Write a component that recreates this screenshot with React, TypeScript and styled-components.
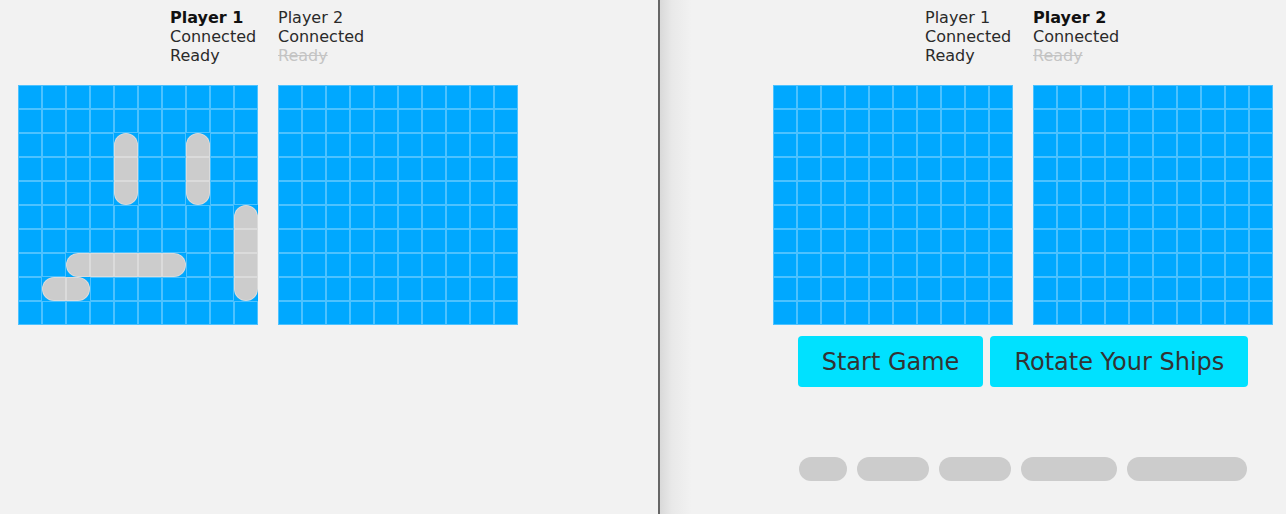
import React from "react";
import styled, { createGlobalStyle, css } from "styled-components";

const GlobalStyle = createGlobalStyle`
  html, body { margin: 0; padding: 0; }
  body {
    font-family: "DejaVu Sans", "Liberation Sans", sans-serif;
    background: #f2f2f2;
    color: #222;
  }
`;

const Page = styled.div`
  display: flex;
  height: 100vh;
  background: #f2f2f2;
  overflow: hidden;
`;

const Pane = styled.div<{ $inset: number; $shaded?: boolean }>`
  box-sizing: border-box;
  padding: 8px 0 0 ${(p) => p.$inset}px;
  ${(p) =>
    p.$shaded
      ? css`
          flex: 1;
          background: linear-gradient(to right, #d9d9d9 0px, #e9e9e9 12px, #f2f2f2 32px);
        `
      : css`
          width: 660px;
          flex: none;
          border-right: 2px solid #666;
        `}
`;

const Column = styled.div`
  width: 500px;
  display: flex;
  flex-direction: column;
  align-items: center;
`;

const PlayersRow = styled.div`
  display: flex;
  gap: 20px;
  font-size: 16px;
  line-height: 19px;
`;

const PlayerInfo = styled.div`
  display: flex;
  flex-direction: column;
  width: 88px;
`;

const Name = styled.span<{ $bold?: boolean }>`
  font-weight: ${(p) => (p.$bold ? 700 : 400)};
  color: ${(p) => (p.$bold ? "#111" : "#2a2a2a")};
`;

const Status = styled.span<{ $off?: boolean }>`
  color: ${(p) => (p.$off ? "#c4c4c4" : "#2a2a2a")};
  text-decoration: ${(p) => (p.$off ? "line-through" : "none")};
`;

const Boards = styled.div`
  display: flex;
  gap: 20px;
  margin-top: 20px;
`;

const Board = styled.div`
  display: grid;
  grid-template-columns: repeat(10, 24px);
  grid-auto-rows: 24px;
  background: #00a8ff;
`;

type End = "top" | "bottom" | "left" | "right" | "mid" | undefined;

const radiusFor = (end: End) => {
  switch (end) {
    case "top":
      return "12px 12px 0 0";
    case "bottom":
      return "0 0 12px 12px";
    case "left":
      return "12px 0 0 12px";
    case "right":
      return "0 12px 12px 0";
    default:
      return "0";
  }
};

const Cell = styled.div<{ $ship?: boolean; $end?: End }>`
  box-sizing: border-box;
  border: 1px solid rgba(255, 255, 255, 0.3);
  background: ${(p) => (p.$ship ? "#cccccc" : "transparent")};
  border-radius: ${(p) => radiusFor(p.$end)};
`;

const ButtonRow = styled.div`
  display: flex;
  gap: 7px;
  margin-top: 11px;
`;

const ActionButton = styled.button`
  height: 51px;
  padding: 0 24px;
  background: #00e1ff;
  border: none;
  border-radius: 4px;
  font-family: "DejaVu Sans", "Liberation Sans", sans-serif;
  font-size: 24px;
  color: #333;
  cursor: pointer;
`;

const PillRow = styled.div`
  display: flex;
  gap: 10px;
  margin-top: 70px;
`;

const Pill = styled.div<{ $len: number }>`
  width: ${(p) => p.$len * 24}px;
  height: 24px;
  border-radius: 12px;
  background: #cccccc;
`;

type Ship = { r: number; c: number; len: number; vertical: boolean };

const fleet: Ship[] = [
  { r: 2, c: 4, len: 3, vertical: true },
  { r: 2, c: 7, len: 3, vertical: true },
  { r: 5, c: 9, len: 4, vertical: true },
  { r: 7, c: 2, len: 5, vertical: false },
  { r: 8, c: 1, len: 2, vertical: false },
];

function cellInfo(ships: Ship[], r: number, c: number): { ship: boolean; end: End } {
  for (const s of ships) {
    if (s.vertical) {
      if (c === s.c && r >= s.r && r < s.r + s.len) {
        const end: End = r === s.r ? "top" : r === s.r + s.len - 1 ? "bottom" : "mid";
        return { ship: true, end };
      }
    } else if (r === s.r && c >= s.c && c < s.c + s.len) {
      const end: End = c === s.c ? "left" : c === s.c + s.len - 1 ? "right" : "mid";
      return { ship: true, end };
    }
  }
  return { ship: false, end: undefined };
}

const Grid: React.FC<{ ships?: Ship[] }> = ({ ships = [] }) => {
  const cells = [];
  for (let r = 0; r < 10; r++) {
    for (let c = 0; c < 10; c++) {
      const info = cellInfo(ships, r, c);
      cells.push(<Cell key={`${r}-${c}`} $ship={info.ship} $end={info.end} />);
    }
  }
  return <Board>{cells}</Board>;
};

const Players: React.FC<{ me: 1 | 2 }> = ({ me }) => (
  <PlayersRow>
    <PlayerInfo>
      <Name $bold={me === 1}>Player 1</Name>
      <Status>Connected</Status>
      <Status>Ready</Status>
    </PlayerInfo>
    <PlayerInfo>
      <Name $bold={me === 2}>Player 2</Name>
      <Status>Connected</Status>
      <Status $off>Ready</Status>
    </PlayerInfo>
  </PlayersRow>
);

export default function App() {
  return (
    <>
      <GlobalStyle />
      <Page>
        <Pane $inset={18}>
          <Column>
            <Players me={1} />
            <Boards>
              <Grid ships={fleet} />
              <Grid />
            </Boards>
          </Column>
        </Pane>
        <Pane $inset={113} $shaded>
          <Column>
            <Players me={2} />
            <Boards>
              <Grid />
              <Grid />
            </Boards>
            <ButtonRow>
              <ActionButton>Start Game</ActionButton>
              <ActionButton>Rotate Your Ships</ActionButton>
            </ButtonRow>
            <PillRow>
              {[2, 3, 3, 4, 5].map((n, i) => (
                <Pill key={i} $len={n} />
              ))}
            </PillRow>
          </Column>
        </Pane>
      </Page>
    </>
  );
}
